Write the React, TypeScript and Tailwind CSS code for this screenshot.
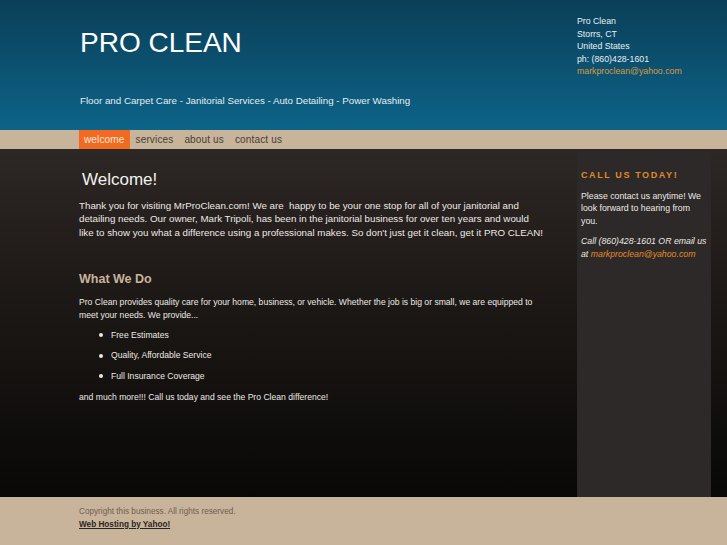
const contact = ["Pro Clean", "Storrs, CT", "United States", "ph: (860)428-1601"];
const navItems = ["welcome", "services", "about us", "contact us"];
const services = ["Free Estimates", "Quality, Affordable Service", "Full Insurance Coverage"];

export default function App() {
  return (
    <div className="h-[545px] w-[727px] overflow-hidden font-['Liberation_Sans',Arial,sans-serif]">
      {/* header */}
      <header className="flex h-[130px] bg-gradient-to-b from-[#0a3f58] to-[#0c6489]">
        <div className="w-[577px] pl-[80px]">
          <h1 className="mt-[27px] text-[28px] leading-[32px] text-white">PRO CLEAN</h1>
          <p className="mt-[35px] text-[9.75px] text-[#e6ecef]">
            Floor and Carpet Care - Janitorial Services - Auto Detailing - Power Washing
          </p>
        </div>
        <div className="pt-[15px] text-[8.75px] leading-[12.6px] text-[#e8eef2]">
          {contact.map((line) => (
            <div key={line}>{line}</div>
          ))}
          <div className="text-[#d99a3c]">markproclean@yahoo.com</div>
        </div>
      </header>

      {/* nav */}
      <nav className="flex h-[19px] gap-[1px] bg-[#c8b39b] pl-[79px] text-[10px] leading-[19px] tracking-[0.15px]">
        {navItems.map((item, i) => (
          <span
            key={item}
            className={`px-[5px] ${i === 0 ? "bg-[#f26a22] text-[#fde8dc]" : "text-[#4a3d33]"}`}
          >
            {item}
          </span>
        ))}
      </nav>

      {/* main */}
      <main className="flex h-[348px] bg-gradient-to-b from-[#2d2725] via-[#1a1614] to-[#090807]">
        <div className="w-[577px] pl-[79px] text-[#ece8e4]">
          <div className="w-[480px]">
            <h2 className="ml-[3px] mt-[21px] text-[17px] leading-[20px] text-[#f2f0ee]">Welcome!</h2>
            <p className="mt-[9px] whitespace-nowrap text-[9.75px] leading-[13.3px]">
              Thank you for visiting MrProClean.com! We are&nbsp; happy to be your one stop for all of your janitorial and
              <br />
              detailing needs. Our owner, Mark Tripoli, has been in the janitorial business for over ten years and would
              <br />
              like to show you what a difference using a professional makes. So don't just get it clean, get it PRO CLEAN!
            </p>
            <h3 className="mt-[32px] text-[12.5px] font-bold leading-[16px] text-[#c8b39b]">What We Do</h3>
            <div className="w-[462px] text-[8.6px] leading-[13px]">
              <p className="mt-[9px]">
                Pro Clean provides quality care for your home, business, or vehicle. Whether the job is big or small, we
                are equipped to meet your needs. We provide...
              </p>
              <ul className="mt-[7px] flex flex-col gap-[7.5px] pl-[20px]">
                {services.map((s) => (
                  <li key={s} className="flex items-center gap-[8px]">
                    <span className="h-[4px] w-[4px] rounded-full bg-[#ece8e4]" />
                    {s}
                  </li>
                ))}
              </ul>
              <p className="mt-[8px]">and much more!!! Call us today and see the Pro Clean difference!</p>
            </div>
          </div>
        </div>
        <aside className="w-[134px] bg-[#2d2928] px-[4px] text-[8.75px] leading-[12.6px] text-[#ece8e4]">
          <h4 className="mt-[20px] text-[9px] font-bold tracking-[1.6px] text-[#e08a2a]">CALL US TODAY!</h4>
          <p className="mt-[8px]">Please contact us anytime! We look forward to hearing from you.</p>
          <p className="mt-[8px] italic">
            Call (860)428-1601 OR email us
            <br />
            at <span className="text-[#e08a2a]">markproclean@yahoo.com</span>
          </p>
        </aside>
      </main>

      {/* footer */}
      <footer className="h-[48px] bg-[#c8b39b] pl-[79px] pt-[9px] text-[8.2px] leading-[12.5px]">
        <div className="text-[#6e6052]">Copyright this business. All rights reserved.</div>
        <div className="font-bold text-[#2b241f] underline">Web Hosting by Yahoo!</div>
      </footer>
    </div>
  );
}
